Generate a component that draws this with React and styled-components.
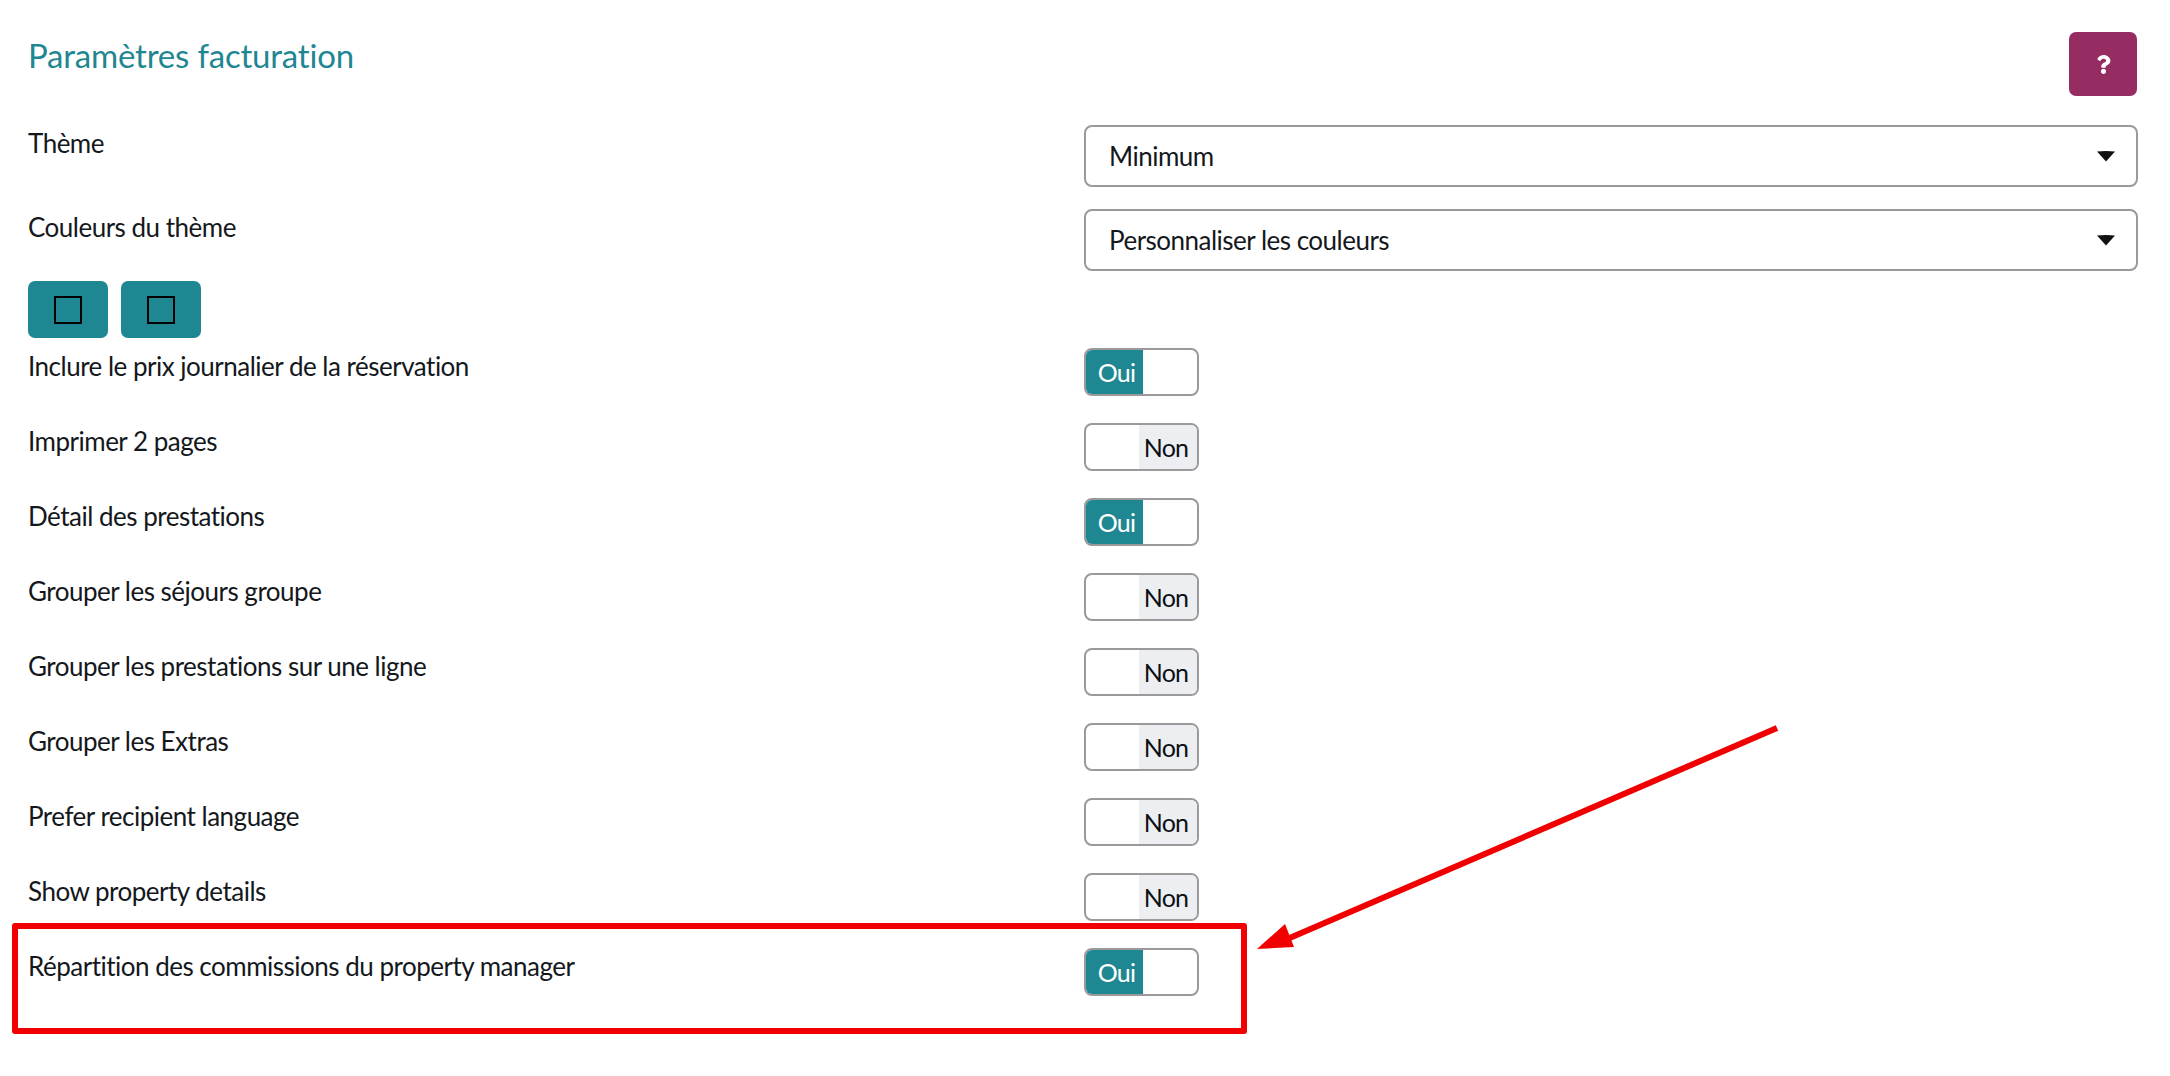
import React from 'react'
import styled, { createGlobalStyle } from 'styled-components'
import { FaQuestion } from 'react-icons/fa'

const GlobalStyle = createGlobalStyle`
  html, body { margin: 0; padding: 0; background: #fff; }
  body { font-family: "Lato", "Open Sans", sans-serif; color: #14181c; }
  * { box-sizing: border-box; }
`

const toggles = [
  { label: 'Inclure le prix journalier de la réservation', on: true },
  { label: 'Imprimer 2 pages', on: false },
  { label: 'Détail des prestations', on: true },
  { label: 'Grouper les séjours groupe', on: false },
  { label: 'Grouper les prestations sur une ligne', on: false },
  { label: 'Grouper les Extras', on: false },
  { label: 'Prefer recipient language', on: false },
  { label: 'Show property details', on: false },
  { label: 'Répartition des commissions du property manager', on: true },
]

function Caret() {
  return (
    <svg width="20" height="12" viewBox="0 0 20 12">
      <path d="M1 1.5 Q10 0.5 19 1.5 L10 11.5 Z" fill="#111" />
    </svg>
  )
}

function Select({ value }) {
  return (
    <SelectBox>
      {value}
      <Caret />
    </SelectBox>
  )
}

function Toggle({ on }) {
  return (
    <ToggleBox>
      {on ? <OnPart>Oui</OnPart> : <BlankPart />}
      {on ? <BlankPart /> : <OffPart>Non</OffPart>}
    </ToggleBox>
  )
}

export default function App() {
  return (
    <Page>
      <GlobalStyle />
      <Header>
        <Title>Paramètres facturation</Title>
        <HelpButton><FaQuestion size={19} /></HelpButton>
      </Header>
      <SelectRow>
        <Label>Thème</Label>
        <Select value="Minimum" />
      </SelectRow>
      <SelectRow>
        <Label>Couleurs du thème</Label>
        <Select value="Personnaliser les couleurs" />
      </SelectRow>
      <Swatches>
        <Swatch><SwatchColor /></Swatch>
        <Swatch><SwatchColor /></Swatch>
      </Swatches>
      <ToggleList>
        {toggles.map((t) => (
          <ToggleRow key={t.label}>
            <Label>{t.label}</Label>
            <Toggle on={t.on} />
          </ToggleRow>
        ))}
      </ToggleList>
      <Highlight />
      <Arrow viewBox="0 0 2170 1076">
        <line x1="1777" y1="728" x2="1285" y2="940" stroke="#f00000" strokeWidth="6" />
        <polygon points="1257,949 1285,924 1294,947" fill="#f00000" />
      </Arrow>
    </Page>
  )
}

const Page = styled.div`
  position: relative;
  width: 2170px;
  height: 1076px;
  padding: 32px 32px 0 28px;
  overflow: hidden;
`

const Header = styled.div`
  display: flex;
  justify-content: space-between;
  align-items: flex-start;
  height: 64px;
  margin-bottom: 29px;
`

const Title = styled.h2`
  margin: 0;
  font-size: 33px;
  line-height: 46px;
  font-weight: 400;
  letter-spacing: -0.2px;
  color: #1f8791;
`

const HelpButton = styled.button`
  width: 68px;
  height: 64px;
  margin-right: 1px;
  padding: 0;
  border: none;
  border-radius: 7px;
  background: #952c62;
  color: #fff;
  display: flex;
  align-items: center;
  justify-content: center;
`

const SelectRow = styled.div`
  display: grid;
  grid-template-columns: 1056px 1fr;
  margin-bottom: 22px;
`

const Label = styled.div`
  font-size: 26px;
  line-height: 36px;
  letter-spacing: -0.5px;
`

const SelectBox = styled.div`
  height: 62px;
  padding: 0 20px 0 23px;
  border: 2px solid #9a9a9a;
  border-radius: 8px;
  display: flex;
  align-items: center;
  justify-content: space-between;
  font-size: 26px;
  letter-spacing: -0.5px;
`

const Swatches = styled.div`
  display: flex;
  gap: 13px;
  margin: -12px 0 10px;
`

const Swatch = styled.button`
  width: 80px;
  height: 57px;
  padding: 0;
  border: none;
  border-radius: 7px;
  background: #1f8791;
  display: flex;
  align-items: center;
  justify-content: center;
`

const SwatchColor = styled.span`
  width: 28px;
  height: 28px;
  border: 2px solid #000;
`

const ToggleList = styled.div`
  display: flex;
  flex-direction: column;
  gap: 27px;
`

const ToggleRow = styled.div`
  display: grid;
  grid-template-columns: 1056px 1fr;
  height: 48px;
`

const ToggleBox = styled.div`
  width: 115px;
  height: 48px;
  border: 2px solid #9a9a9a;
  border-radius: 8px;
  overflow: hidden;
  display: flex;
  justify-content: space-between;
  font-size: 25px;
  letter-spacing: -0.8px;
`

const OnPart = styled.span`
  width: 57px;
  padding-left: 4px;
  background: #1f8791;
  color: #fff;
  display: flex;
  align-items: center;
  justify-content: center;
`

const OffPart = styled.span`
  width: 58px;
  padding-right: 4px;
  background: #eceef2;
  color: #0c1014;
  display: flex;
  align-items: center;
  justify-content: center;
`

const BlankPart = styled.span`
  flex: 0 0 auto;
`

const Highlight = styled.div`
  position: absolute;
  left: 12px;
  top: 923px;
  width: 1235px;
  height: 111px;
  border: 6px solid #f00000;
  border-radius: 3px;
  pointer-events: none;
`

const Arrow = styled.svg`
  position: absolute;
  left: 0;
  top: 0;
  width: 2170px;
  height: 1076px;
  pointer-events: none;
`
